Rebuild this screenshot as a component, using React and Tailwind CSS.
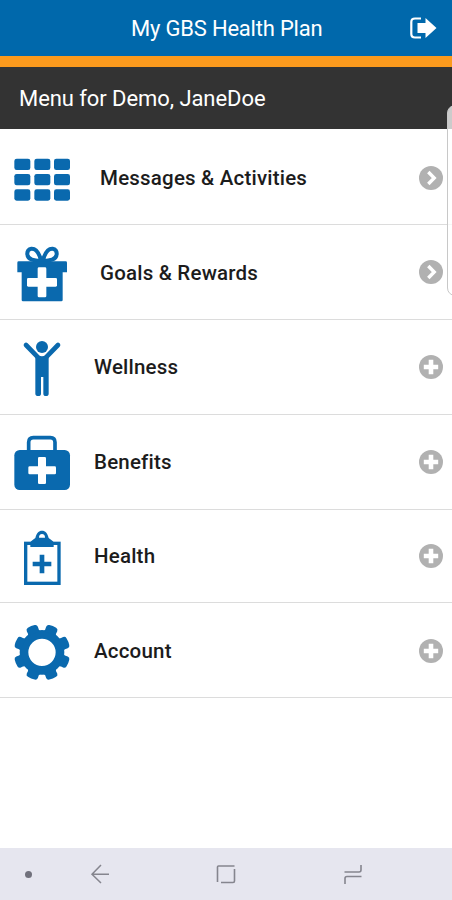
import React from 'react';

const GridIcon = () => (
  <g>
    {[32, 78, 124].map((y) =>
      [7, 67, 126].map((x) => (
        <rect key={`${x}-${y}`} x={x} y={y} width="48" height="34" rx="7" />
      ))
    )}
  </g>
);

const GiftIcon = () => (
  <g>
    <path
      d="M88 58C82 34 72 19 58 20C41 22 42 48 60 53C69 56 79 57 88 58ZM92 58C98 34 108 19 122 20C139 22 138 48 120 53C111 56 101 57 92 58Z"
      fill="none"
      stroke="currentColor"
      strokeWidth="12"
    />
    <path d="M20 58H161Q165 58 165 62V91H152V174Q152 178 148 178H33Q29 178 29 174V91H16V62Q16 58 20 58Z" />
    <rect x="77" y="76" width="26" height="90" rx="4" fill="white" />
    <rect x="45" y="108" width="90" height="26" rx="4" fill="white" />
  </g>
);

const PersonIcon = () => (
  <g>
    <circle cx="90" cy="30" r="18" />
    <path
      d="M42 24L78 61M138 24L102 61"
      stroke="currentColor"
      strokeWidth="14"
      strokeLinecap="round"
    />
    <path d="M70 54Q90 61 110 54V170Q110 177 102 177Q94 177 94 170V120H87V170Q87 177 79 177Q70 177 70 170Z" />
  </g>
);

const KitIcon = () => (
  <g>
    <path
      d="M50 60V31Q50 17 64 17H115Q129 17 129 31V60"
      fill="none"
      stroke="currentColor"
      strokeWidth="11"
    />
    <rect x="7" y="54" width="167" height="120" rx="16" />
    <rect x="78" y="75" width="24" height="81" rx="4" fill="white" />
    <rect x="49" y="103" width="83" height="24" rx="4" fill="white" />
  </g>
);

const ClipboardIcon = () => (
  <g>
    <rect
      x="41"
      y="52"
      width="100"
      height="120"
      fill="none"
      stroke="currentColor"
      strokeWidth="10"
    />
    <path
      fillRule="evenodd"
      d="M55 63V52Q55 46 61 43L70 36C74 21 80 14 90 14S106 21 110 36L119 43Q125 46 125 52V63ZM81 35H99C99 28 96 24 90 24S81 28 81 35Z"
    />
    <path d="M90 86V142M62 114H118" stroke="currentColor" strokeWidth="14" />
  </g>
);

const GearIcon = () => (
  <g>
    <circle cx="90" cy="94" r="54" fill="none" stroke="currentColor" strokeWidth="26" />
    {[22.5, 67.5, 112.5, 157.5, 202.5, 247.5, 292.5, 337.5].map((angle) => (
      <path
        key={angle}
        d="M70 33Q74 28 72 18Q72 11 79 10Q90 8 101 10Q108 11 108 18Q106 28 110 33Z"
        transform={`rotate(${angle} 90 94)`}
      />
    ))}
  </g>
);

const menuItems = [
  { label: 'Messages & Activities', icon: GridIcon, link: true, row: 'h-24 pt-[3px]', text: 'pl-[28px]' },
  { label: 'Goals & Rewards', icon: GiftIcon, link: true, row: 'h-[95px]', text: 'pl-[28px] pt-px' },
  { label: 'Wellness', icon: PersonIcon, row: 'h-[95px]', text: 'pl-[22px]' },
  { label: 'Benefits', icon: KitIcon, row: 'h-[95px]', text: 'pl-[22px]' },
  { label: 'Health', icon: ClipboardIcon, row: 'h-[93px]', text: 'pl-[22px]' },
  { label: 'Account', icon: GearIcon, row: 'h-[95px] pt-[2px]', text: 'pl-[22px]' },
];

const MenuRow = ({ item }) => {
  const Icon = item.icon;
  return (
    <li className={`flex items-center border-b border-[#dcdcdc] pl-3 pr-[9px] ${item.row}`}>
      <svg viewBox="0 0 180 180" className="h-[60px] w-[60px] shrink-0 text-[#0a69ae]" fill="currentColor">
        <Icon />
      </svg>
      <span className={`flex-1 whitespace-nowrap text-[20.5px] font-medium leading-6 tracking-[0.2px] text-[#1c1c1c] ${item.text}`}>
        {item.label}
      </span>
      <svg viewBox="0 0 24 24" className="h-6 w-6 shrink-0" fill="none" stroke="white">
        <circle cx="12" cy="12" r="12" fill="#b1b1b1" stroke="none" />
        {item.link ? (
          <path d="M9.3 6L15.2 12L9.3 18" strokeWidth="3.4" />
        ) : (
          <path d="M12 4.8V19.2M4.8 12H19.2" strokeWidth="4.6" />
        )}
      </svg>
    </li>
  );
};

const NavBar = () => (
  <footer className="flex h-[52px] items-center bg-[#e6e6ef] text-[#85858e]">
    <span className="ml-[25px] h-[7px] w-[7px] rounded-full bg-[#71717c]" />
    <svg viewBox="0 0 20 20" className="ml-[58px] h-5 w-5" fill="none" stroke="currentColor" strokeWidth="1.5">
      <path d="M11 1L2 10.3L11 19M2 10.3H19" />
    </svg>
    <svg viewBox="0 0 20 20" className="ml-[106px] h-5 w-5" fill="none" stroke="currentColor" strokeWidth="1.6">
      <path d="M1.5 18V3Q1.5 2 2.5 2H18.5M18.5 5V17Q18.5 18.5 17 18.5H5" />
    </svg>
    <svg viewBox="0 0 20 20" className="ml-[107px] h-5 w-5" fill="none" stroke="currentColor" strokeWidth="1.6">
      <path d="M1.5 8H16Q18 8 18 6V1M18.5 12.5H4Q2 12.5 2 14.5V20" />
    </svg>
  </footer>
);

export default function App() {
  return (
    <div className="relative flex h-[900px] w-[452px] flex-col overflow-hidden bg-white font-['Roboto',sans-serif]">
      <header className="flex h-14 items-center justify-between bg-[#0068ab] pl-[131px] pr-[15px] text-white">
        <h1 className="whitespace-nowrap pt-px text-[22px] leading-7 tracking-[-0.2px]">My GBS Health Plan</h1>
        <svg viewBox="0 0 27 22" className="h-[22px] w-[27px]">
          <path d="M11 1.5H5Q1.3 1.5 1.3 5V17Q1.3 20.5 5 20.5H11" fill="none" stroke="white" strokeWidth="2.2" />
          <path d="M7.5 6H15.5V1L26.5 11L15.5 21V16H7.5Z" fill="white" />
        </svg>
      </header>
      <div className="h-[11px] bg-[#fb9a1d]" />
      <div className="flex h-[62px] items-center bg-[#333333] pl-[19px] pt-0.5 text-[22px] leading-7 tracking-[-0.07px] text-white">
        Menu for Demo, JaneDoe
      </div>
      <ul className="flex-1">
        {menuItems.map((item) => (
          <MenuRow key={item.label} item={item} />
        ))}
      </ul>
      <NavBar />
      {/* edge panel handle */}
      <div className="absolute -right-3 top-[105px] h-[191px] w-[17px] rounded-lg border border-[#c8c8c8] bg-white/75" />
    </div>
  );
}
